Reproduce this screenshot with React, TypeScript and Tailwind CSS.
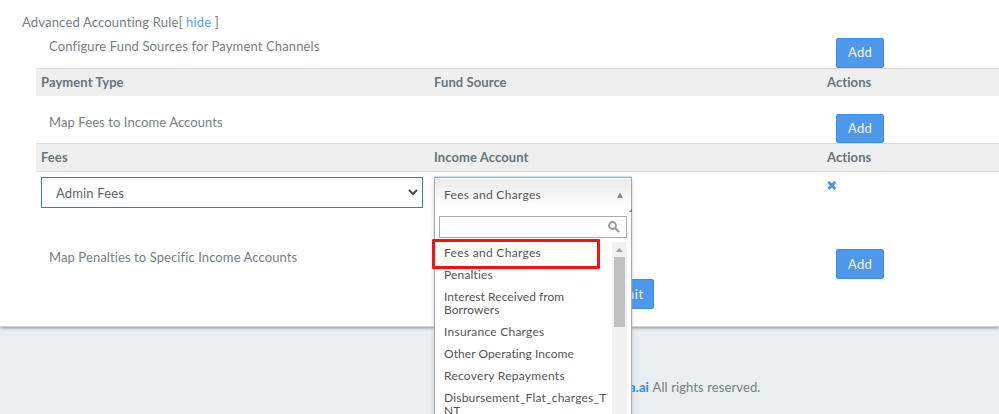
import type { ReactNode } from 'react';

const options: { label: string; style: string }[] = [
  { label: 'Fees and Charges', style: 'w-[166px] tracking-[0.3px]' },
  { label: 'Penalties', style: 'w-[166px] tracking-[0.16px]' },
  { label: 'Interest Received from Borrowers', style: 'w-[140px] tracking-[0.06px]' },
  { label: 'Insurance Charges', style: 'w-[166px] tracking-[0.24px]' },
  { label: 'Other Operating Income', style: 'w-[166px] tracking-[0.06px]' },
  { label: 'Recovery Repayments', style: 'w-[166px] tracking-[0.26px]' },
  { label: 'Disbursement_Flat_charges_TNT', style: 'w-[166px] break-all tracking-[0.2px]' },
];

function Button({ children, className = '' }: { children: ReactNode; className?: string }) {
  return (
    <button
      className={`flex items-center justify-center rounded-[2px] border border-[#3b8dec] bg-[#4f99ed] text-[#f4f8fc] ${className}`}
    >
      {children}
    </button>
  );
}

function SectionRow({ title, className, titleClass, buttonClass }: { title: string; className: string; titleClass: string; buttonClass: string }) {
  return (
    <div className={`flex items-start pl-[13px] ${className}`}>
      <div className={`w-[787px] leading-[18px] ${titleClass}`}>{title}</div>
      <Button className={`w-12 tracking-[0.25px] ${buttonClass}`}>Add</Button>
    </div>
  );
}

function HeaderRow({ cells, className }: { cells: string[]; className: string }) {
  return (
    <div
      className={`grid grid-cols-[393px_393px_1fr] border-t border-[#dadada] bg-[#efefef] pl-[5px] font-bold leading-[27px] tracking-[0.08px] text-[#67757c] ${className}`}
    >
      {cells.map((cell) => (
        <div key={cell}>{cell}</div>
      ))}
    </div>
  );
}

function AccountDropdown() {
  return (
    <div className="absolute top-[5px] left-[398px] z-10 h-[260px] w-[198px] border border-[#a6a8aa] bg-white text-[12px] leading-[13px] text-[#555] shadow-[0_4px_5px_rgba(0,0,0,0.15),0_-1px_1px_#cfe3f5]">
      <div className="flex h-[35px] items-center justify-between bg-linear-to-b from-[#e9e9e9] to-white to-80% pr-2 pb-[2px] pl-[9px] shadow-[inset_0_1px_0_#fff]">
        <span className="tracking-[0.3px]">Fees and Charges</span>
        <svg width="6" height="6" viewBox="0 0 6 6" fill="#888">
          <path d="M3 .5 6 6H0Z" />
        </svg>
      </div>
      <svg className="absolute top-[31px] right-[-1px]" width="3" height="3" viewBox="0 0 3 3" fill="#777">
        <path d="M3 0V3H0Z" />
      </svg>
      <div className="mx-1 mt-[3px] flex h-[22px] items-center justify-end border border-[#aaa] bg-white pr-1.5">
        <svg width="12" height="12" viewBox="0 0 12 12" fill="none" stroke="#999">
          <circle cx="4.5" cy="4.5" r="3.5" strokeWidth="1.8" />
          <path d="m7.3 7.3 3.7 3.7" strokeWidth="2.3" />
        </svg>
      </div>
      <div className="mt-1 flex h-[190px]">
        <ul className="w-[177px] pt-1 pl-[9px]">
          {options.map((option) => (
            <li key={option.label} className={`mb-[9px] ${option.style}`}>
              {option.label}
            </li>
          ))}
        </ul>
        <div className="flex w-[15px] flex-col items-center bg-[#f1f1f1]">
          <div className="flex h-[15px] items-center">
            <svg width="7" height="4" viewBox="0 0 7 4" fill="#a0a0a0">
              <path d="M3.5 0 7 4H0Z" />
            </svg>
          </div>
          <div className="h-[70px] w-[11px] bg-[#c1c1c1]" />
        </div>
      </div>
      <div className="absolute top-[61px] left-[-3px] h-[30px] w-[168px] rounded-[1px] border-3 border-[#fb1010]" />
    </div>
  );
}

export default function App() {
  return (
    <div className="flex h-[414px] w-[999px] flex-col overflow-hidden bg-[#eaeef1] font-['Lato','Open_Sans',sans-serif] text-[13px] text-[#757f84]">
      <main className="h-[327px] shrink-0 border-b border-[#d4d6d6] bg-white pt-[13px] shadow-[0_1px_3px_rgba(0,0,0,0.4)]">
        <div className="h-[18px] pl-[22px] leading-[18px] tracking-[0.18px]">
          Advanced Accounting Rule[ <a className="text-[#5c9ff5]">hide</a> ]
        </div>
        <div className="pl-9">
          <SectionRow
            title="Configure Fund Sources for Payment Channels"
            className="h-[37px]"
            titleClass="pt-[6px] tracking-[0.135px]"
            buttonClass="mt-[7px] h-[30px]"
          />
          <HeaderRow cells={['Payment Type', 'Fund Source', 'Actions']} className="h-7" />
          <SectionRow
            title="Map Fees to Income Accounts"
            className="h-[47px]"
            titleClass="pt-[17px] tracking-[0.09px]"
            buttonClass="mt-[18px] h-[29px]"
          />
          <HeaderRow cells={['Fees', 'Income Account', 'Actions']} className="h-[29px] border-b" />
          <div className="relative grid h-[76px] grid-cols-[393px_393px_1fr] pt-[5px] pl-[5px]">
            <div className="flex h-[31px] w-[382px] items-center justify-between border border-[#2a9179] bg-white pt-[2px] pr-1 pl-3.5 text-[#5f6568]">
              <span className="tracking-[0.15px]">Admin Fees</span>
              <svg className="mb-[2px]" width="10" height="7" viewBox="0 0 10 7" fill="none" stroke="#4a4a4a" strokeWidth="2">
                <path d="m1 1 4 4 4-4" />
              </svg>
            </div>
            <AccountDropdown />
            <svg className="col-start-3 mt-1" width="10" height="9" viewBox="0 0 10 9" fill="none" stroke="#4b97e9" strokeWidth="3">
              <path d="m1.3 1 7 7m0-7-7 7" />
            </svg>
          </div>
          <SectionRow
            title="Map Penalties to Specific Income Accounts"
            className="h-[31px]"
            titleClass="tracking-[0.1px]"
            buttonClass="mt-px h-[30px] pt-[2px]"
          />
          <div className="flex pl-[552px]">
            <Button className="h-[30px] w-[66px] pt-[2px] pl-0.5 tracking-[0.6px]">Submit</Button>
          </div>
        </div>
      </main>
      <footer className="flex pt-[51px] pl-[629px] leading-[18px] tracking-[0.1px]">
        <b className="w-[23.5px] text-[#2f90ec]">a.ai</b>
        <span>All rights reserved.</span>
      </footer>
    </div>
  );
}
